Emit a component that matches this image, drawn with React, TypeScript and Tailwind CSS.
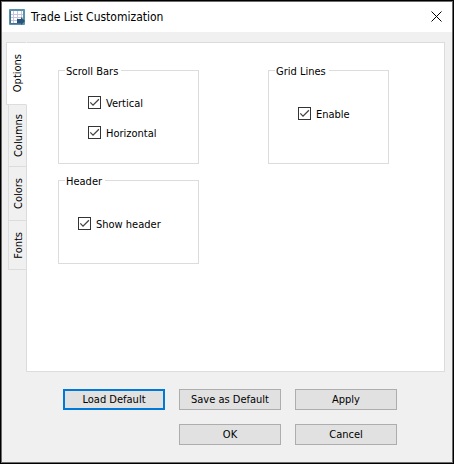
import { useState } from 'react';

const tabs = [
  { name: 'Options', height: 'h-[63px]' },
  { name: 'Columns', height: 'h-[62px]' },
  { name: 'Colors', height: 'h-[54px]' },
  { name: 'Fonts', height: 'h-[49px]' },
];

interface GroupProps {
  title: string;
  className: string;
  children: React.ReactNode;
}

const Group = ({ title, className, children }: GroupProps) => (
  <fieldset className={`min-w-0 border border-[#dcdcdc] px-[6px] ${className}`}>
    <legend className="pt-0.5 pr-[3px] pl-px leading-[13px]">{title}</legend>
    {children}
  </fieldset>
);

const Check = ({ label }: { label: string }) => {
  const [checked, setChecked] = useState(true);

  return (
    <label className="flex h-5 items-center gap-[5px]">
      <span className="grid shrink-0">
        <input
          type="checkbox"
          checked={checked}
          onChange={(e) => setChecked(e.target.checked)}
          className="col-start-1 row-start-1 size-[13px] appearance-none border border-[#333] bg-white"
        />
        {checked && (
          <svg viewBox="0 0 13 13" className="pointer-events-none col-start-1 row-start-1 size-[13px]" fill="none" stroke="#444" strokeWidth="1.3">
            <path d="M2.3 6.4 5 9.1 10.9 3.2" />
          </svg>
        )}
      </span>
      <span className="pt-1 leading-4 whitespace-nowrap">{label}</span>
    </label>
  );
};

const DialogButton = ({ children, className = 'border border-[#adadad]' }: { children: string; className?: string }) => (
  <button type="button" className={`flex h-[21px] items-center justify-center whitespace-nowrap bg-[#e1e1e1] pt-0.5 ${className}`}>
    {children}
  </button>
);

const AppIcon = () => (
  <svg viewBox="0 0 16 16" className="size-4 shrink-0" aria-hidden="true">
    <rect width="16" height="16" rx="1" fill="#5a93ad" />
    <rect x="2" y="2" width="12" height="12" fill="#fff" />
    <path d="M2 5.500h12M2 8.500h12M2 11.500h8M4.500 2v12M8.500 2v12M12.500 2v7" stroke="#c3c6dc" fill="none" />
    <path d="M1.500 2v12.500H12" stroke="#45708f" fill="none" />
    <path d="M8 10h4V8l4 4-4 4v-2H8z" fill="#2b5278" />
  </svg>
);

const App = () => {
  const [active, setActive] = useState('Options');

  return (
    <div className="flex min-h-screen flex-col border border-black bg-[#f0f0f0] font-['DejaVu_Sans_Condensed','DejaVu_Sans',sans-serif] text-[11px] text-black">
      <div className="flex grow flex-col border border-[#6b6b6b]">
        <header className="flex h-[30px] items-center bg-white pl-[7px]">
          <AppIcon />
          <h1 className="ml-[6px] grow text-[12px]">Trade List Customization</h1>
          <button type="button" aria-label="Close" className="mr-[9px] mb-0.5 flex size-[13px] items-center justify-center">
            <svg viewBox="0 0 11 11" className="size-[11px]" stroke="#000" strokeWidth="1" fill="none">
              <path d="M.5.5l10 10M10.500.5l-10 10" />
            </svg>
          </button>
        </header>

        <main className="flex px-1 pt-[10px] pr-[7px]">
          <div role="tablist" aria-orientation="vertical" className="-mr-px flex w-[21px] flex-col items-end">
            {tabs.map(({ name, height }) => (
              <button
                key={name}
                type="button"
                role="tab"
                aria-selected={active === name}
                onClick={() => setActive(name)}
                className={`flex items-center justify-center border border-[#dcdcdc] pl-0.5 ${height} ${
                  active === name ? 'z-10 w-[21px] border-r-white bg-white' : 'w-[19px] border-t-0'
                }`}
              >
                <span className="rotate-180 leading-[15px] [writing-mode:vertical-rl]">{name}</span>
              </button>
            ))}
          </div>

          <section role="tabpanel" className="h-[330px] grow border border-[#dcdcdc] bg-white pt-5 pr-[55px] pl-[31px]">
            <div className="grid grid-cols-[141fr_121fr] gap-x-[69px] gap-y-[9px]">
              <Group title="Scroll Bars" className="h-[101px]">
                <div className="flex flex-col gap-[10px] pt-[14px] pl-[23px]">
                  <Check label="Vertical" />
                  <Check label="Horizontal" />
                </div>
              </Group>
              <Group title="Grid Lines" className="h-[101px]">
                <div className="pt-[25px] pl-[23px]">
                  <Check label="Enable" />
                </div>
              </Group>
              <Group title="Header" className="h-[91px]">
                <div className="pt-[25px] pl-[13px]">
                  <Check label="Show header" />
                </div>
              </Group>
            </div>
          </section>
        </main>

        <footer className="grid grid-cols-3 gap-[14px] pt-[17px] pr-[55px] pb-[17px] pl-[61px]">
          <DialogButton className="border-2 border-[#0078d7]">Load Default</DialogButton>
          <DialogButton>Save as Default</DialogButton>
          <DialogButton>Apply</DialogButton>
          <DialogButton className="col-start-2 border border-[#adadad]">OK</DialogButton>
          <DialogButton>Cancel</DialogButton>
        </footer>
      </div>
    </div>
  );
};

export default App;
